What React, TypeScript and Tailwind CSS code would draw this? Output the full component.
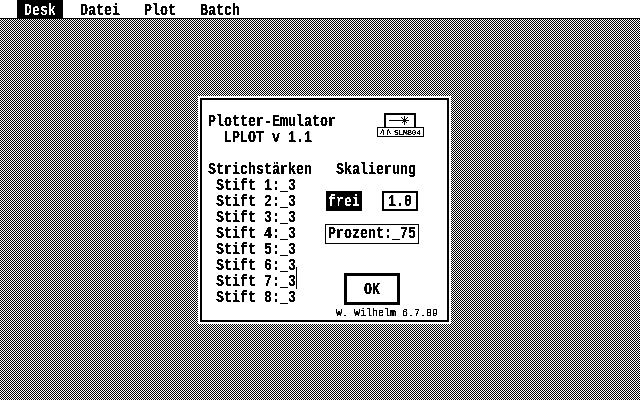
import React from "react";

const FONT = "font-['Liberation_Mono',monospace] font-bold";

function T({ children }: { children: React.ReactNode }) {
  return (
    <span className="block h-4 w-fit origin-left translate-y-px scale-x-[0.8] whitespace-pre text-[16.67px] leading-4">
      {children}
    </span>
  );
}

function W({ children }: { children: React.ReactNode }) {
  return <div className="[-webkit-text-stroke:0.2px_white]"><T>{children}</T></div>;
}

function Logo() {
  return (
    <svg width="47" height="24" viewBox="0 0 47 24" className="block" shapeRendering="crispEdges">
      <path d="M8 14V1H38V14" fill="none" stroke="#000" strokeWidth="2" />
      <path d="M12 7.5H25" stroke="#000" strokeWidth="1" />
      <path d="M23 7.5H32M27.5 3V12M24.5 4.5L30.5 10.5M30.5 4.5L24.5 10.5" stroke="#000" strokeWidth="1" />
      <rect x="0.5" y="14.5" width="45.5" height="8.5" fill="#fff" stroke="#000" strokeWidth="1" />
      <path d="M3.5 21.5L5.5 16.5M6.5 16.5V21.5M10.5 16.5V21.5M11.5 16.5L13.5 21.5" fill="none" stroke="#000" strokeWidth="1" />
      <text x="17" y="21.5" fontFamily="Liberation Mono" fontWeight="400" fontSize="8" textLength="27" fill="#000">
        SLM804
      </text>
    </svg>
  );
}

const pens = [1, 2, 3, 4, 5, 6, 7, 8];

export default function App() {
  return (
    <div className={`flex h-[400px] w-[640px] flex-col overflow-hidden bg-white text-black brightness-[0.75] contrast-[20] ${FONT}`}>
      <div className="flex h-[19px] border-b border-black bg-white pl-[17px]">
        <div className="h-[18px] w-[46px] bg-black pl-[7px] pt-[2px] text-white">
          <W>Desk</W>
        </div>
        <div className="flex pl-[17px] pt-[2px]">
          <div className="w-[64px]"><T>Datei</T></div>
          <div className="w-[56px]"><T>Plot</T></div>
          <div><T>Batch</T></div>
        </div>
      </div>
      <div className="flex-1 bg-[repeating-conic-gradient(#000_0_25%,#fff_0_50%)] bg-[length:2px_2px] pl-[198px] pt-[77px]">
        <div className="h-[228px] w-[253px] border-2 border-white">
          <div className="relative h-[224px] w-[249px] border-2 border-black bg-white pl-[6px] pt-[13px]">
            <div className="flex">
              <div className="w-[169px]">
                <T>Plotter-Emulator</T>
                <div className="pl-4"><T>LPLOT v 1.1</T></div>
              </div>
              <Logo />
            </div>
            <div className="mt-[16px] flex">
              <div className="w-[118px]">
                <T>Strichstärken</T>
                <div className="pl-2">
                  {pens.map((n) => (
                    <div key={n} className="relative">
                      <T>{`Stift ${n}:_3`}</T>
                      {n === 7 && <div className="absolute left-[80px] top-[-6px] h-[22px] w-px bg-black" />}
                    </div>
                  ))}
                </div>
              </div>
              <div className="flex flex-col">
                <div className="pl-[10px]"><T>Skalierung</T></div>
                <div className="mt-[14px] flex">
                  <div className="h-5 w-9 bg-black pl-[2px] pt-[2px] text-white"><W>frei</W></div>
                  <div className="ml-5 h-5 w-9 border-2 border-black pl-1"><T>1.0</T></div>
                </div>
                <div className="-ml-px mt-[13px] h-5 w-[94px] border border-black pl-[2px]"><T>Prozent:_75</T></div>
                <div className="ml-[18px] mt-[29px] flex h-8 w-14 border-[3px] border-black pl-[17px] pt-[5px]"><T>OK</T></div>
                <div className="mt-[3px] whitespace-pre pl-[10px] text-[10px] font-normal leading-[12px]">W. Wilhelm 6.7.89</div>
              </div>
            </div>
          </div>
        </div>
      </div>
    </div>
  );
}
